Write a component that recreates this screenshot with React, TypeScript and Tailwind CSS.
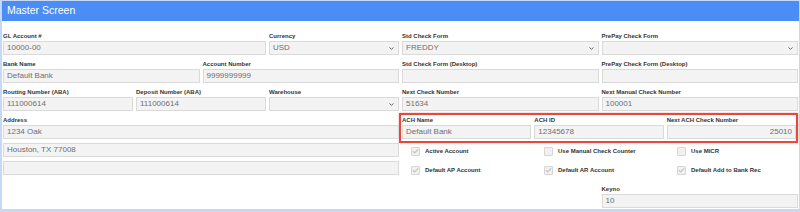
import type { ReactNode } from "react";
import { ChevronDown, Check } from "lucide-react";

type FieldProps = {
  label: string;
  value?: string;
  select?: boolean;
  right?: boolean;
  className?: string;
};

function Box({ value, select, right }: { value?: string; select?: boolean; right?: boolean }) {
  return (
    <div
      className={`relative flex h-[14px] items-center border border-[#dadada] bg-[#f3f3f3] px-[3px] text-[8px] leading-none text-[#6f6f6f] ${
        right ? "justify-end" : ""
      }`}
    >
      <span>{value}</span>
      {select ? (
        <ChevronDown className="absolute right-[3px] top-[3px] size-[7px] text-[#555]" strokeWidth={3} />
      ) : null}
    </div>
  );
}

function Field({ label, value, select, right, className }: FieldProps) {
  return (
    <div className={className}>
      <div className="h-[9px] whitespace-nowrap text-[6px] font-bold leading-[9px] text-[#333]">{label}</div>
      <Box value={value} select={select} right={right} />
    </div>
  );
}

function Tick({ label, checked }: { label: string; checked?: boolean }) {
  return (
    <div className="flex h-[9px] items-center pl-[9px]">
      <span className="flex size-[9px] items-center justify-center rounded-[1px] border border-[#d6d6d6] bg-[#f1f1f1]">
        {checked ? <Check className="size-[7px] text-[#c4c4c4]" strokeWidth={4} /> : null}
      </span>
      <span className="ml-[5px] whitespace-nowrap text-[6px] font-bold text-[#333]">{label}</span>
    </div>
  );
}

function Half({ children }: { children: ReactNode }) {
  return <div className="grid grid-cols-6 gap-x-[3px] gap-y-[5px] content-start">{children}</div>;
}

export default function App() {
  return (
    <div
      className="h-[212px] w-[800px] border border-l-2 border-b-[3px] border-[#c7d8f6] bg-white"
      style={{ fontFamily: '"Liberation Sans", Arial, sans-serif' }}
    >
      <div className="flex h-[20px] items-center bg-[#4b8df4] px-[5px] text-[10.5px] text-white">Master Screen</div>

      <div className="grid grid-cols-2 gap-x-[3px] pl-[1px] pr-[1px] pt-[11px]">
        <div className="flex flex-col gap-y-[5px]">
          <Half>
            <Field className="col-span-4" label="GL Account #" value="10000-00" />
            <Field className="col-span-2" label="Currency" value="USD" select />
            <Field className="col-span-3" label="Bank Name" value="Default Bank" />
            <Field className="col-span-3" label="Account Number" value="9999999999" />
            <Field className="col-span-2" label="Routing Number (ABA)" value="111000614" />
            <Field className="col-span-2" label="Deposit Number (ABA)" value="111000614" />
            <Field className="col-span-2" label="Warehouse" select />
          </Half>
          <div>
            <div className="h-[9px] text-[6px] font-bold leading-[9px] text-[#333]">Address</div>
            <div className="flex flex-col gap-y-[4px]">
              <Box value="1234 Oak" />
              <Box value="Houston, TX 77008" />
              <Box />
            </div>
          </div>
        </div>

        <div className="flex flex-col">
          <Half>
            <Field className="col-span-3" label="Std Check Form" value="FREDDY" select />
            <Field className="col-span-3" label="PrePay Check Form" select />
            <Field className="col-span-3" label="Std Check Form (Desktop)" />
            <Field className="col-span-3" label="PrePay Check Form (Desktop)" />
            <Field className="col-span-3" label="Next Check Number" value="51634" />
            <Field className="col-span-3" label="Next Manual Check Number" value="100001" />
          </Half>

          <div className="-ml-[3px] mt-[2px] border-2 border-[#e5493e] pb-[2px] pl-[1px] pt-[1px] shadow-[0_0_2px_rgba(229,73,62,0.5)]">
            <div className="grid grid-cols-3 gap-x-[3px]">
              <Field label="ACH Name" value="Default Bank" />
              <Field label="ACH ID" value="12345678" />
              <Field label="Next ACH Check Number" value="25010" right />
            </div>
          </div>

          <div className="mt-[4px] grid grid-cols-3 gap-x-[3px] gap-y-[10px]">
            <Tick label="Active Account" checked />
            <Tick label="Use Manual Check Counter" />
            <Tick label="Use MICR" />
            <Tick label="Default AP Account" checked />
            <Tick label="Default AR Account" checked />
            <Tick label="Default Add to Bank Rec" checked />
          </div>

          <div className="mt-[10px] grid grid-cols-6 gap-x-[3px]">
            <Field className="col-span-3 col-start-4" label="Keyno" value="10" />
          </div>
        </div>
      </div>
    </div>
  );
}
